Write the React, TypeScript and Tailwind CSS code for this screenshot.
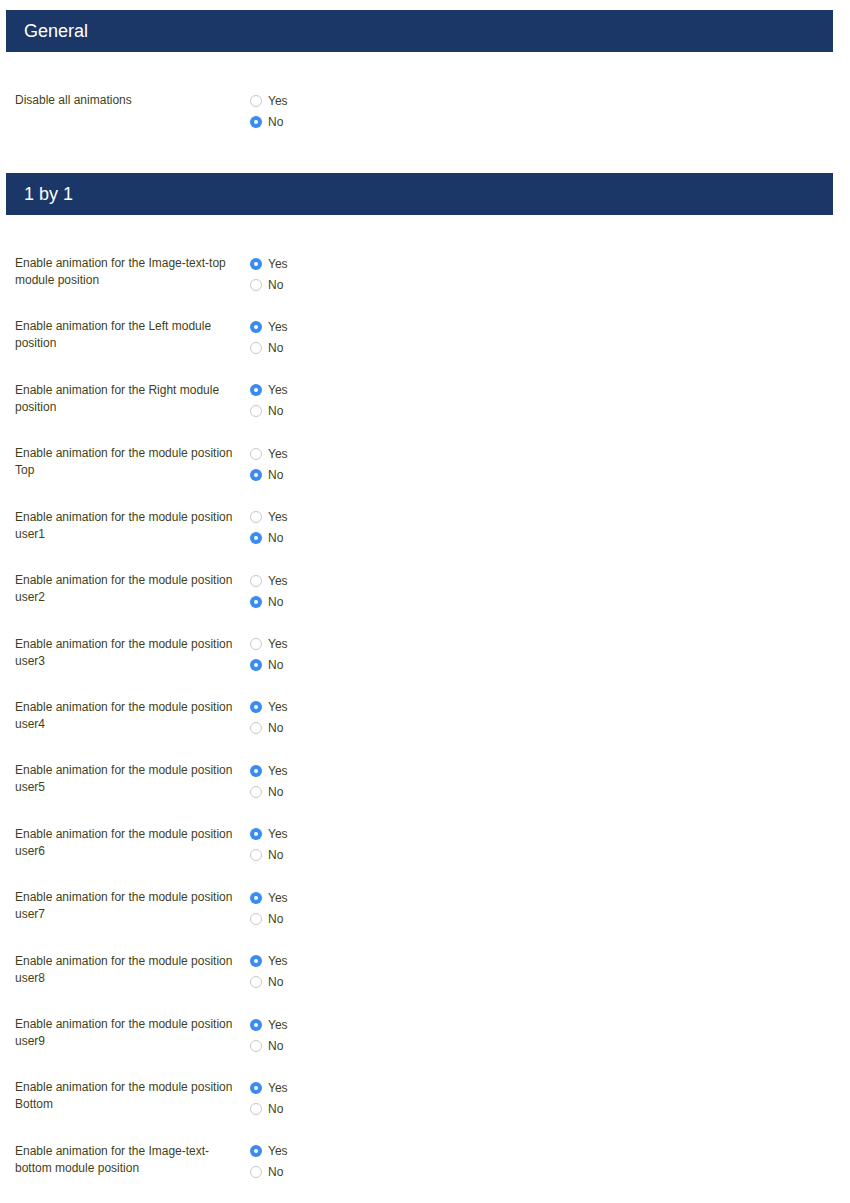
import React from "react";

type Row = { label: string; yes: boolean };

const oneByOne: Row[] = [
  { label: "Enable animation for the Image-text-top module position", yes: true },
  { label: "Enable animation for the Left module position", yes: true },
  { label: "Enable animation for the Right module position", yes: true },
  { label: "Enable animation for the module position Top", yes: false },
  { label: "Enable animation for the module position user1", yes: false },
  { label: "Enable animation for the module position user2", yes: false },
  { label: "Enable animation for the module position user3", yes: false },
  { label: "Enable animation for the module position user4", yes: true },
  { label: "Enable animation for the module position user5", yes: true },
  { label: "Enable animation for the module position user6", yes: true },
  { label: "Enable animation for the module position user7", yes: true },
  { label: "Enable animation for the module position user8", yes: true },
  { label: "Enable animation for the module position user9", yes: true },
  { label: "Enable animation for the module position Bottom", yes: true },
  { label: "Enable animation for the Image-text-bottom module position", yes: true },
];

const Radio = ({ checked, text }: { checked: boolean; text: string }) => (
  <div className="flex items-center h-[21px]">
    {checked ? (
      <span className="flex items-center justify-center w-[12px] h-[12px] rounded-full bg-[#3a8cf2]">
        <span className="w-[4px] h-[4px] rounded-full bg-white" />
      </span>
    ) : (
      <span className="w-[12px] h-[12px] rounded-full border border-[#c9c9c9] bg-white" />
    )}
    <span className="ml-[6px]">{text}</span>
  </div>
);

const Setting = ({ label, yes }: Row) => (
  <div className="flex h-[63.43px]">
    <div className="w-[235px] pr-[10px] pt-[2px] leading-[17px]">{label}</div>
    <div className="flex flex-col">
      <Radio checked={yes} text="Yes" />
      <Radio checked={!yes} text="No" />
    </div>
  </div>
);

const Header = ({ title }: { title: string }) => (
  <div className="ml-[6px] mr-[17px] h-[42px] bg-[#1b3768] flex items-center pl-[18px] pt-[1px] text-white text-[18px]">
    {title}
  </div>
);

const App = () => {
  return (
    <div
      className="bg-white min-h-[1203px] pt-[10px] text-[12px] text-[#3f3f1c]"
      style={{ fontFamily: '"Liberation Sans", Arial, sans-serif' }}
    >
      <Header title="General" />
      <div className="px-[15px] pt-[38px]">
        <div className="flex h-[83px]">
          <div className="w-[235px] pr-[10px] pt-[2px] leading-[17px]">Disable all animations</div>
          <div className="flex flex-col">
            <Radio checked={false} text="Yes" />
            <Radio checked={true} text="No" />
          </div>
        </div>
      </div>
      <Header title="1 by 1" />
      <div className="px-[15px] pt-[38px]">
        {oneByOne.map((r) => (
          <Setting key={r.label} {...r} />
        ))}
      </div>
    </div>
  );
};

export default App;
